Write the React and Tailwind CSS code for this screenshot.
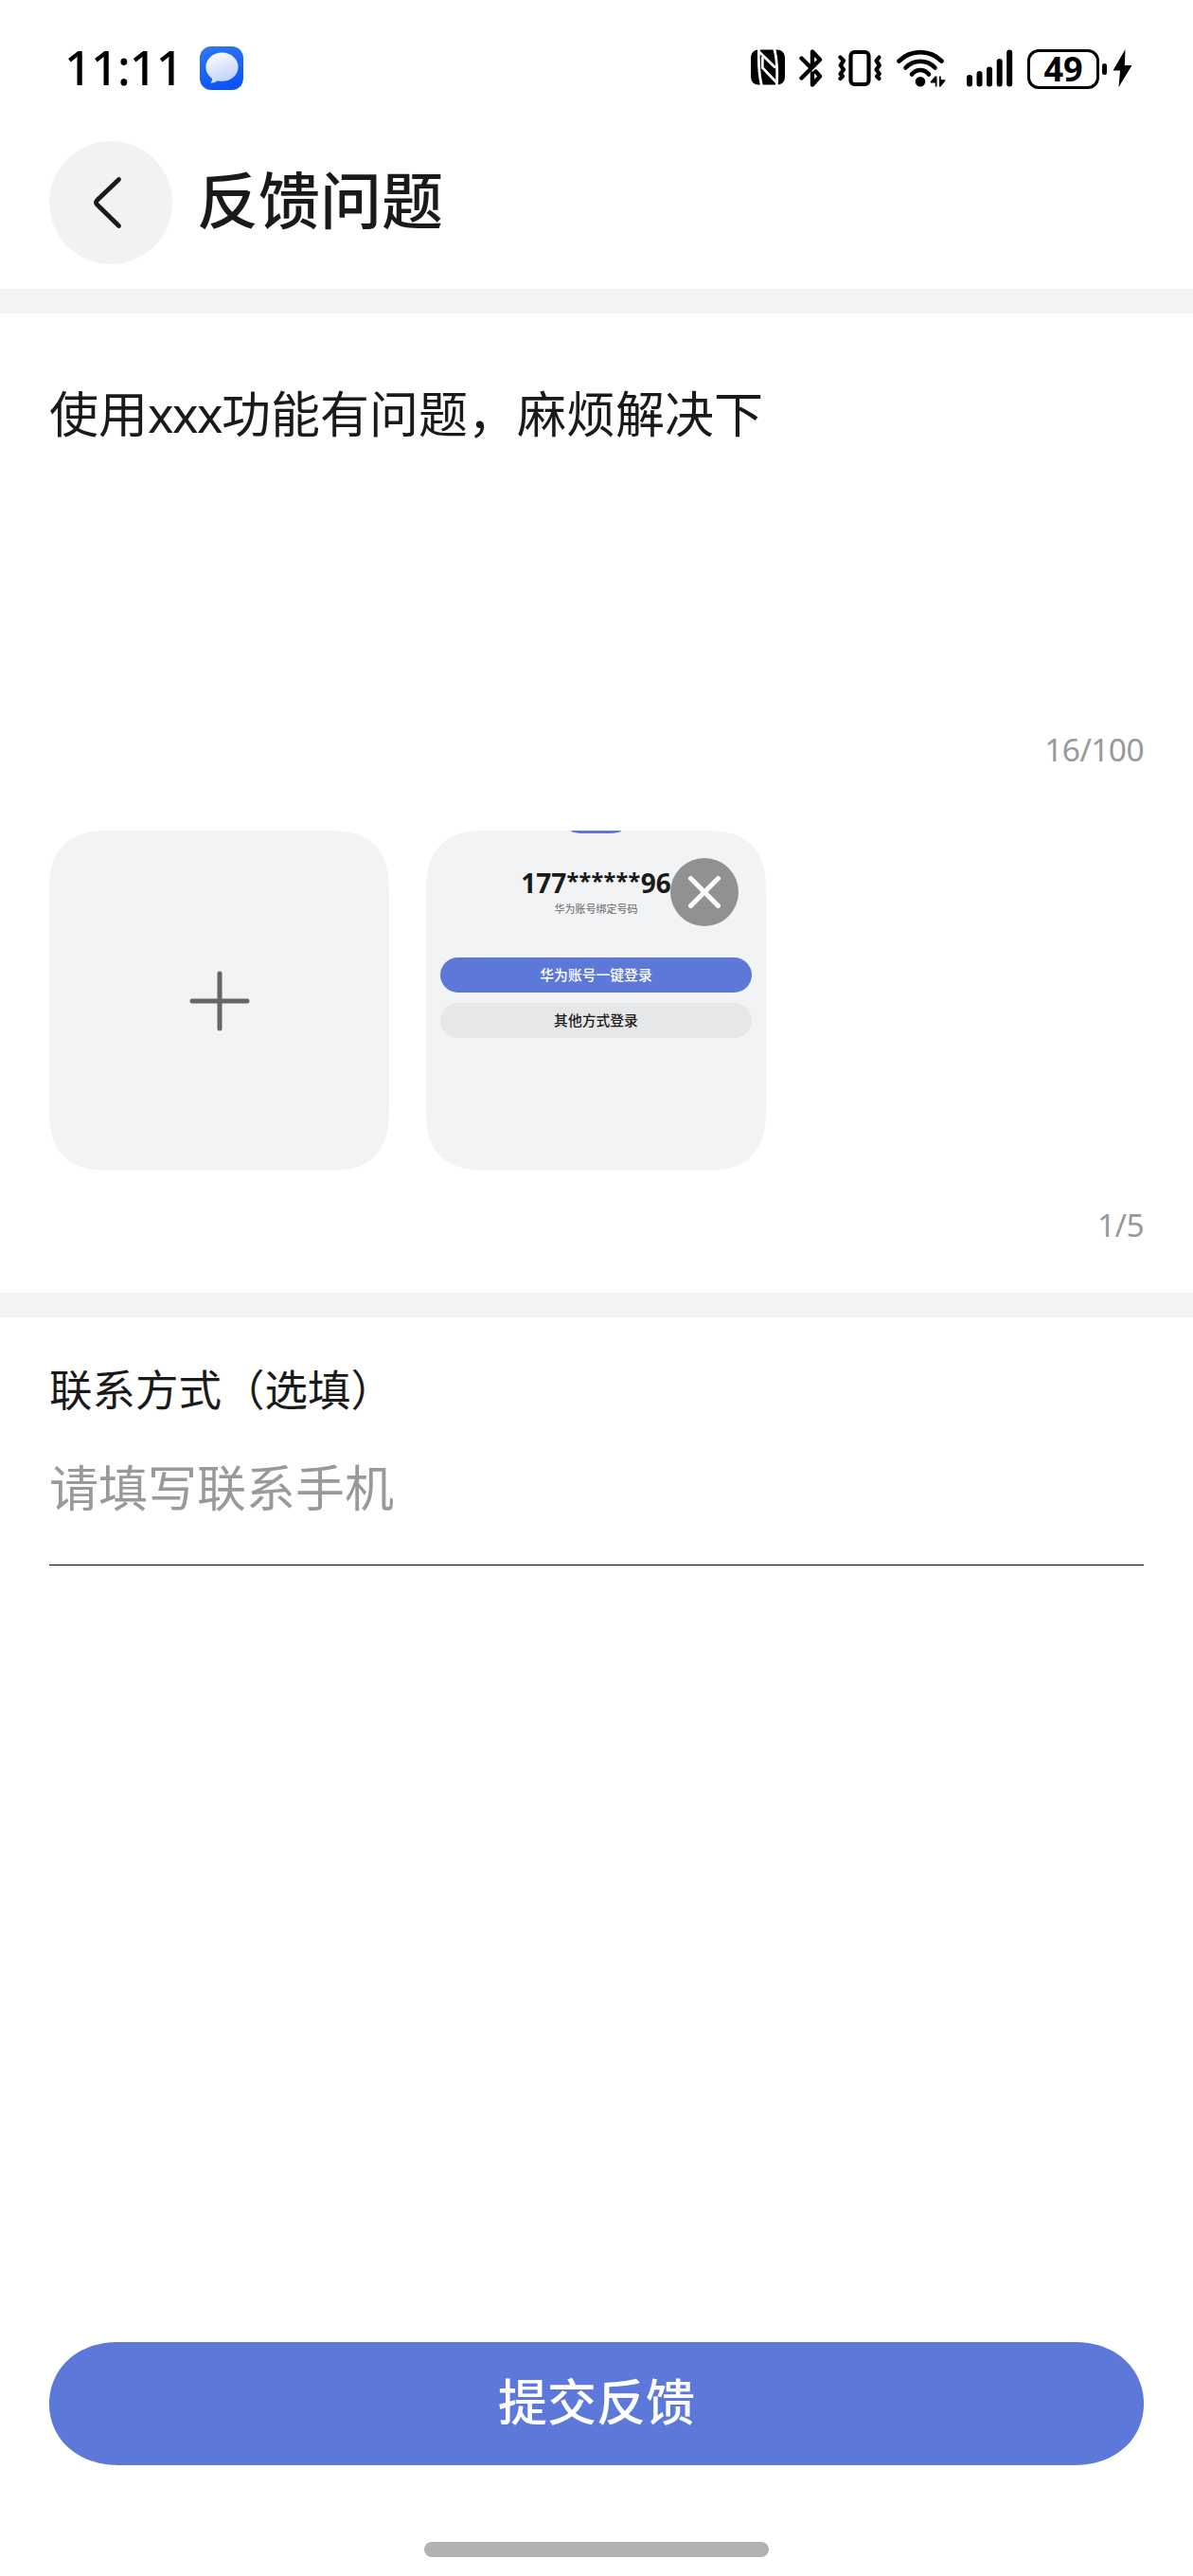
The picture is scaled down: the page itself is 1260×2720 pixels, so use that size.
function ChatAppIcon() {
  return (
    <svg className="h-[46px] w-[46px]" viewBox="0 0 46 46">
      <defs>
        <linearGradient id="appBg" x1="0" y1="0" x2="0.3" y2="1">
          <stop offset="0" stopColor="#2f7af0" />
          <stop offset="1" stopColor="#0b55f8" />
        </linearGradient>
        <linearGradient id="bubble" x1="0" y1="0" x2="0.4" y2="1">
          <stop offset="0" stopColor="#ffffff" />
          <stop offset="1" stopColor="#c3d4fb" />
        </linearGradient>
      </defs>
      <rect width="46" height="46" rx="12" fill="url(#appBg)" />
      <path
        d="M23.5 6.5C33 6.5 40.6 13.2 40.6 21.7S33 36.8 23.5 36.8c-1.7 0-3.2-.2-4.7-.6-2 1.7-4.6 2.5-7.3 2.5 1.2-1.5 1.7-3.3 1.4-5C9 31 6.4 26.6 6.4 21.7 6.4 13.2 14 6.5 23.5 6.5Z"
        fill="url(#bubble)"
      />
    </svg>
  );
}

function NfcIcon() {
  return (
    <svg className="h-[38px] w-[36px]" viewBox="0 0 36 38">
      <rect y="0.500" width="36" height="37" rx="8" />
      <g fill="none" stroke="#fff" strokeWidth="2.800">
        <path d="M8.500 0C8 14 8.500 27 11.500 38.500" />
        <path d="M24.800 -0.500C27.800 11 28.200 24 27.300 38.500" />
        <path d="M8.500 2.500 26 19.500" />
        <path d="M12.300 8V19.500L27.500 35.500" />
      </g>
    </svg>
  );
}

function BluetoothIcon() {
  return (
    <svg className="ml-[15px] h-[40px] w-[26px]" viewBox="844 52 26 40">
      <path
        d="M846.500 61.500 856.500 71.500M846.500 82.500 866 63 858 54.500V70M858 77.500V89.500L866 80.500 861.500 75.500"
        fill="none"
        stroke="#000"
        strokeWidth="4.400"
        strokeLinecap="round"
        strokeLinejoin="round"
      />
    </svg>
  );
}

function VibrateIcon() {
  return (
    <svg className="ml-[15px] h-[40px] w-[48px]" viewBox="885 52 48 40" fill="none" stroke="#000" strokeWidth="4.200" strokeLinecap="round" strokeLinejoin="round">
      <rect x="898.500" y="55" width="19" height="34" rx="4" />
      <path d="M887.500 60.500 891 64 887.700 69 891 73.500 887.500 78 890 80.500 887.500 83" />
      <path d="M928.500 60.500 925.500 64 928.800 69 925.500 73.500 928.800 78 926 80.500 928.500 83" />
    </svg>
  );
}

function WifiIcon() {
  return (
    <svg className="ml-[14px] h-[40px] w-[52px]" viewBox="947 52 52 40">
      <g fill="none" stroke="#000" strokeWidth="4.600" strokeLinecap="round">
        <path d="M949.500 64.500C962 52 982 52 994.500 64.500" />
        <path d="M956.500 71.500C965 62.500 979 62.500 987.500 71.500" />
        <path d="M963 78.500C968 72.500 976 72.500 981 78.500" />
      </g>
      <circle cx="972" cy="86.300" r="5.300" />
      <path d="M982.500 86.500 987.500 80.500H989.500V91.500H987.800V87.500H983Z M999 84.500 993.500 91.500H992V80.500H993.700V84Z" />
    </svg>
  );
}

function SignalIcon() {
  return (
    <svg className="ml-[22px] h-[40px] w-[49px]" viewBox="1021 52 49 40" stroke="#000" strokeWidth="6" strokeLinecap="round">
      <path d="M1024 82V88.500M1034.500 78V88.500M1045 73.500V88.500M1055.700 65V88.500M1066.200 55.500V88.500" />
    </svg>
  );
}

function StatusBar() {
  return (
    <div className="flex h-[143px] shrink-0 items-start pl-[68px] text-black">
      <div className="mt-[37px] w-[143px] font-['Noto_Sans'] text-[50.500px] leading-[68px] font-medium tracking-[-0.900px]">11:11</div>
      <div className="mt-[49px]">
        <ChatAppIcon />
      </div>
      <div className="ml-[536px] mt-[52px] flex items-start">
        <NfcIcon />
        <BluetoothIcon />
        <VibrateIcon />
        <WifiIcon />
        <SignalIcon />
        <div className="ml-[15px] flex h-[42px] w-[76px] items-center justify-center rounded-[12px] border-[3px] border-black font-['Noto_Sans'] text-[36px] leading-none font-bold">
          49
        </div>
        <div className="mt-[15px] ml-[3px] h-[12px] w-[5px] rounded-full bg-black" />
        <svg className="ml-[6px] h-[40px] w-[21px]" viewBox="0 0 21 40">
          <path d="M13.500 0 0.500 22.500H8L6.500 40 20.500 17H12.800Z" />
        </svg>
      </div>
    </div>
  );
}

function Header() {
  return (
    <header className="flex h-[162px] shrink-0 items-start px-[52px] pt-[6px]">
      <button className="flex h-[130px] w-[130px] items-center justify-center rounded-full bg-[#f2f2f2]">
        <svg className="h-[56px] w-[56px]" viewBox="89 186 56 56" fill="none" stroke="#1a1a1a" strokeWidth="4.800" strokeLinecap="round" strokeLinejoin="round">
          <path d="M125.500 189.500 102.500 211.500Q100.500 213.700 102.500 216L125.500 238.500" />
        </svg>
      </button>
      <h1 className="ml-[26px] text-[65px] leading-[119px] font-medium">反馈问题</h1>
    </header>
  );
}

function Divider() {
  return <div className="h-[26px] shrink-0 bg-[#f1f3f5]" />;
}

function Thumbnail() {
  return (
    <div className="relative h-[359px] w-[359px] overflow-hidden rounded-[66px] bg-[#f1f3f5] [corner-shape:superellipse(1.4)]">
      <div className="mx-auto h-[3px] w-[53px] rounded-b-[12px_3px] bg-[#5c79d9]" />
      <div className="mt-[37px] flex h-[30px] items-center justify-center font-['Noto_Sans'] text-[28px] leading-[30px] font-bold">
        177<span className="mb-[4px] text-[23.500px] tracking-[0.300px]">******</span>96
      </div>
      <div className="mt-[4px] text-center text-[11px] leading-[16px] text-[#666]">华为账号绑定号码</div>
      <div className="mx-[15px] mt-[44px] h-[37px] rounded-full bg-[#5c79d9] text-center text-[14.800px] leading-[35px] font-medium text-white">华为账号一键登录</div>
      <div className="mx-[15px] mt-[11px] h-[37px] rounded-full bg-[#e6e7e9] text-center text-[14.800px] leading-[35px] font-medium">其他方式登录</div>
      <button className="absolute top-[29px] right-[29px] flex h-[72px] w-[72px] items-center justify-center rounded-full bg-[#909193]">
        <svg className="h-[36px] w-[36px]" viewBox="0 0 36 36" stroke="#fff" strokeWidth="5" strokeLinecap="round">
          <path d="M3.500 3.500 32.500 32.500M32.500 3.500 3.500 32.500" />
        </svg>
      </button>
    </div>
  );
}

export default function App() {
  return (
    <div className="flex h-[2720px] w-[1260px] flex-col overflow-hidden bg-white font-['Noto_Sans_CJK_SC',sans-serif] text-[#1a1a1a]">
      <StatusBar />
      <Header />
      <Divider />
      <section className="flex h-[1034px] shrink-0 flex-col px-[52px]">
        <p className="mt-[64px] h-[363px] text-[52px] leading-[80px]">
          使用<span className="font-['Noto_Sans'] tracking-[-1.500px]">xxx</span>功能有问题，麻烦解决下
        </p>
        <div className="h-[119px] text-right font-['Noto_Sans'] text-[33.500px] leading-[66px] tracking-[-0.600px] text-[#999]">16/100</div>
        <div className="flex gap-[39px]">
          <button className="flex h-[359px] w-[359px] items-center justify-center rounded-[66px] bg-[#f3f3f3] [corner-shape:superellipse(1.4)]">
            <svg className="h-[64px] w-[64px]" viewBox="0 0 64 64" stroke="#666" strokeWidth="5" strokeLinecap="round">
              <path d="M32 3V61M3 32H61" />
            </svg>
          </button>
          <Thumbnail />
        </div>
        <div className="mt-[24px] text-right font-['Noto_Sans'] text-[33.500px] leading-[66px] tracking-[-0.600px] text-[#999]">1/5</div>
      </section>
      <Divider />
      <section className="flex flex-1 flex-col px-[52px]">
        <h2 className="mt-[40px] h-[68px] text-[45.500px] leading-[68px]">联系方式（选填）</h2>
        <div className="mt-[30px] h-[124px] border-b border-black text-[52px] leading-[80px] text-[#999]">请填写联系手机</div>
      </section>
      <footer className="flex h-[247px] shrink-0 flex-col items-center px-[52px]">
        <button className="flex h-[130px] w-full justify-center rounded-[72px/65px] bg-[#5c79d9] text-[52px] leading-[122px] font-medium text-white [corner-shape:superellipse(1.06)]">提交反馈</button>
        <div className="mt-[81px] h-[16px] w-[364px] rounded-full bg-[#b2b2b2]" />
      </footer>
    </div>
  );
}
